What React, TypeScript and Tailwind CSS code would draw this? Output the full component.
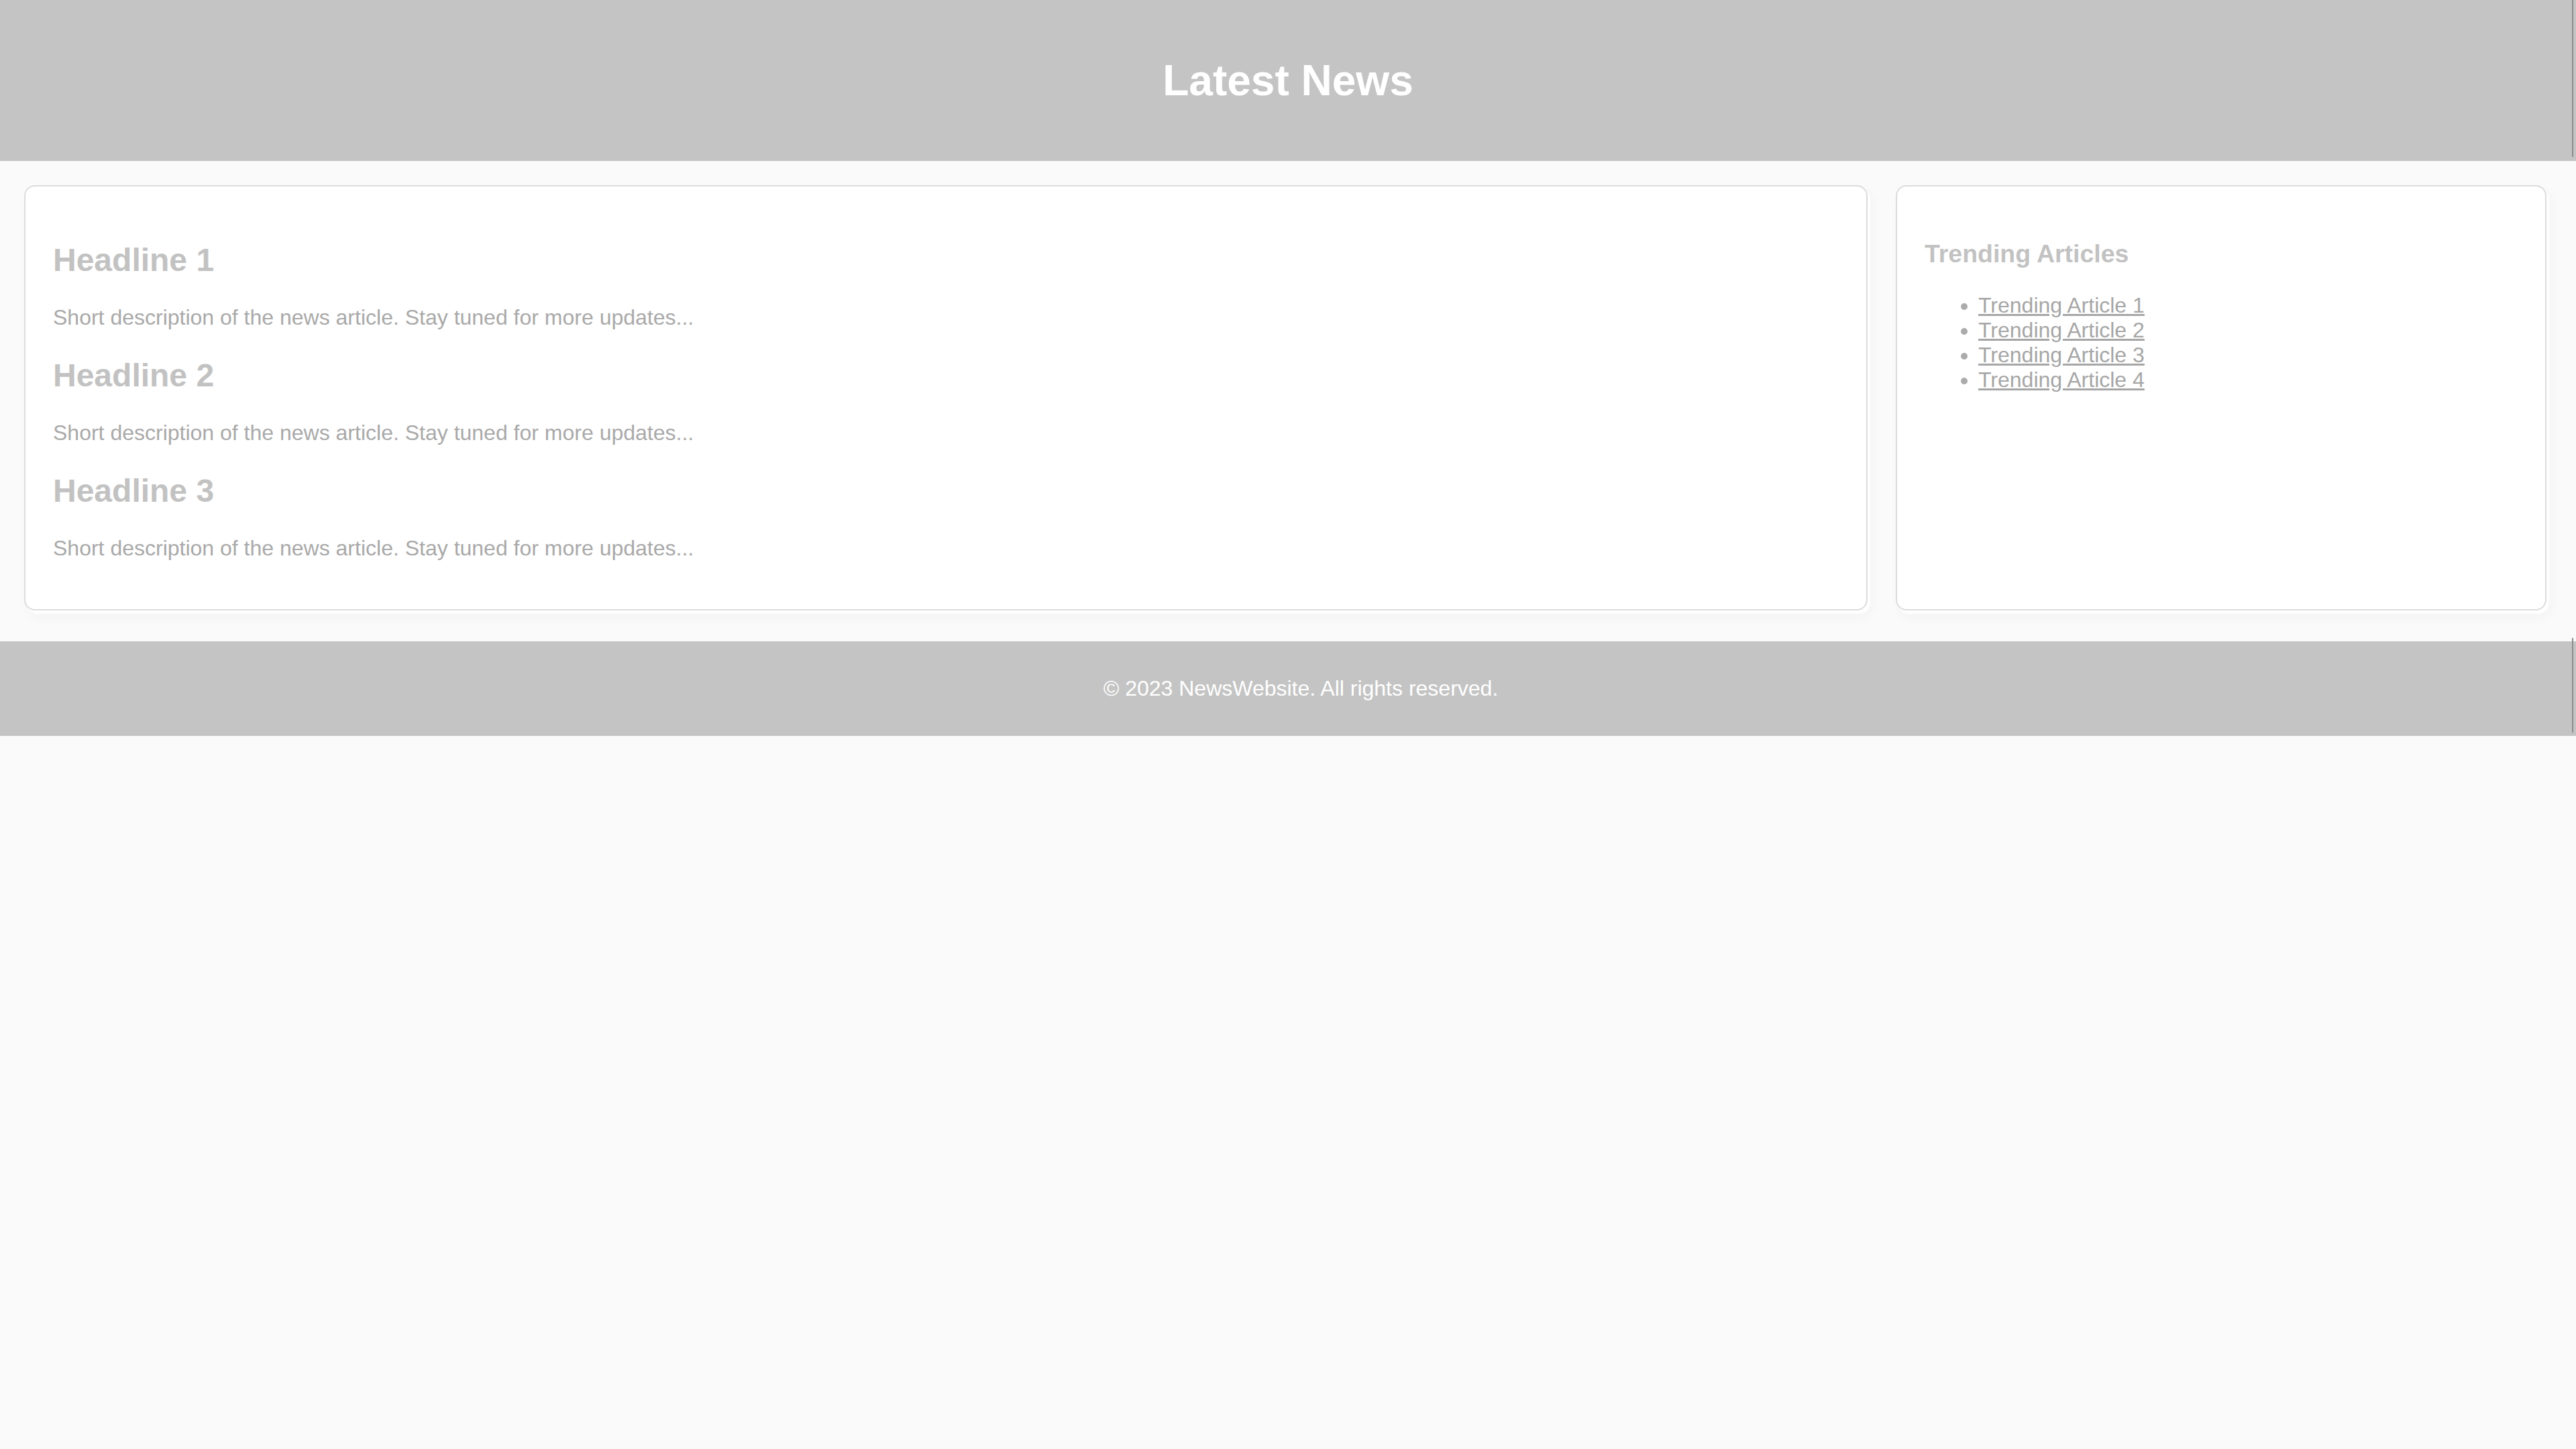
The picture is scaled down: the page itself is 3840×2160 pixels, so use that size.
import React from "react";

const headlines = ["Headline 1", "Headline 2", "Headline 3"];
const trending = ["Trending Article 1", "Trending Article 2", "Trending Article 3", "Trending Article 4"];

export default function App() {
  return (
    <div className="relative min-h-[2160px] bg-[#fafafa] font-['Liberation_Sans',Arial,sans-serif]">
      <header className="relative bg-[#c4c4c4] py-[40px] text-center">
        <h1 className="my-[43px] text-[64px] font-bold leading-[normal] text-white">Latest News</h1>
        <div className="absolute right-[4px] top-0 h-[234px] w-[2px] bg-[#8c8c8c]" />
      </header>

      <main className="flex items-stretch gap-[42px] pb-[46px] pl-[36px] pr-[44px] pt-[36px]">
        <section className="flex-1 rounded-[16px] border-2 border-[#dcdcdc] bg-white pb-[40px] pl-[41px] pr-[40px] pt-[42px] shadow-[4px_5px_3px_0_#ffffff,6px_10px_18px_rgba(0,0,0,0.035)]">
          {headlines.map((h) => (
            <article key={h}>
              <h2 className="my-[40px] text-[48px] font-bold leading-[normal] text-[#c2c2c2]">{h}</h2>
              <p className="my-[32px] text-[32px] leading-[normal] text-[#a9a9a9]">
                Short description of the news article. Stay tuned for more updates...
              </p>
            </article>
          ))}
        </section>

        <aside className="w-[970px] shrink-0 rounded-[16px] border-2 border-[#dcdcdc] bg-white pb-[40px] pl-[41px] pr-[40px] pt-[42px] shadow-[4px_5px_3px_0_#ffffff,6px_10px_18px_rgba(0,0,0,0.035)]">
          <h3 className="my-[37px] text-[37.44px] font-bold leading-[normal] text-[#c2c2c2]">Trending Articles</h3>
          <ul className="my-[32px] list-disc pl-[80px] text-[32px] leading-[normal] text-[#ababab]">
            {trending.map((t) => (
              <li key={t}>
                <a href="#" className="text-[#a6a6a6] underline">
                  {t}
                </a>
              </li>
            ))}
          </ul>
        </aside>
      </main>

      <footer className="relative bg-[#c4c4c4] py-[20px] pl-[38px] text-center">
        <p className="my-[32px] text-[32px] leading-[normal] text-white">© 2023 NewsWebsite. All rights reserved.</p>
        <div className="absolute right-[4px] top-[-5px] h-[141px] w-[2px] bg-[#8c8c8c]" />
      </footer>
    </div>
  );
}
